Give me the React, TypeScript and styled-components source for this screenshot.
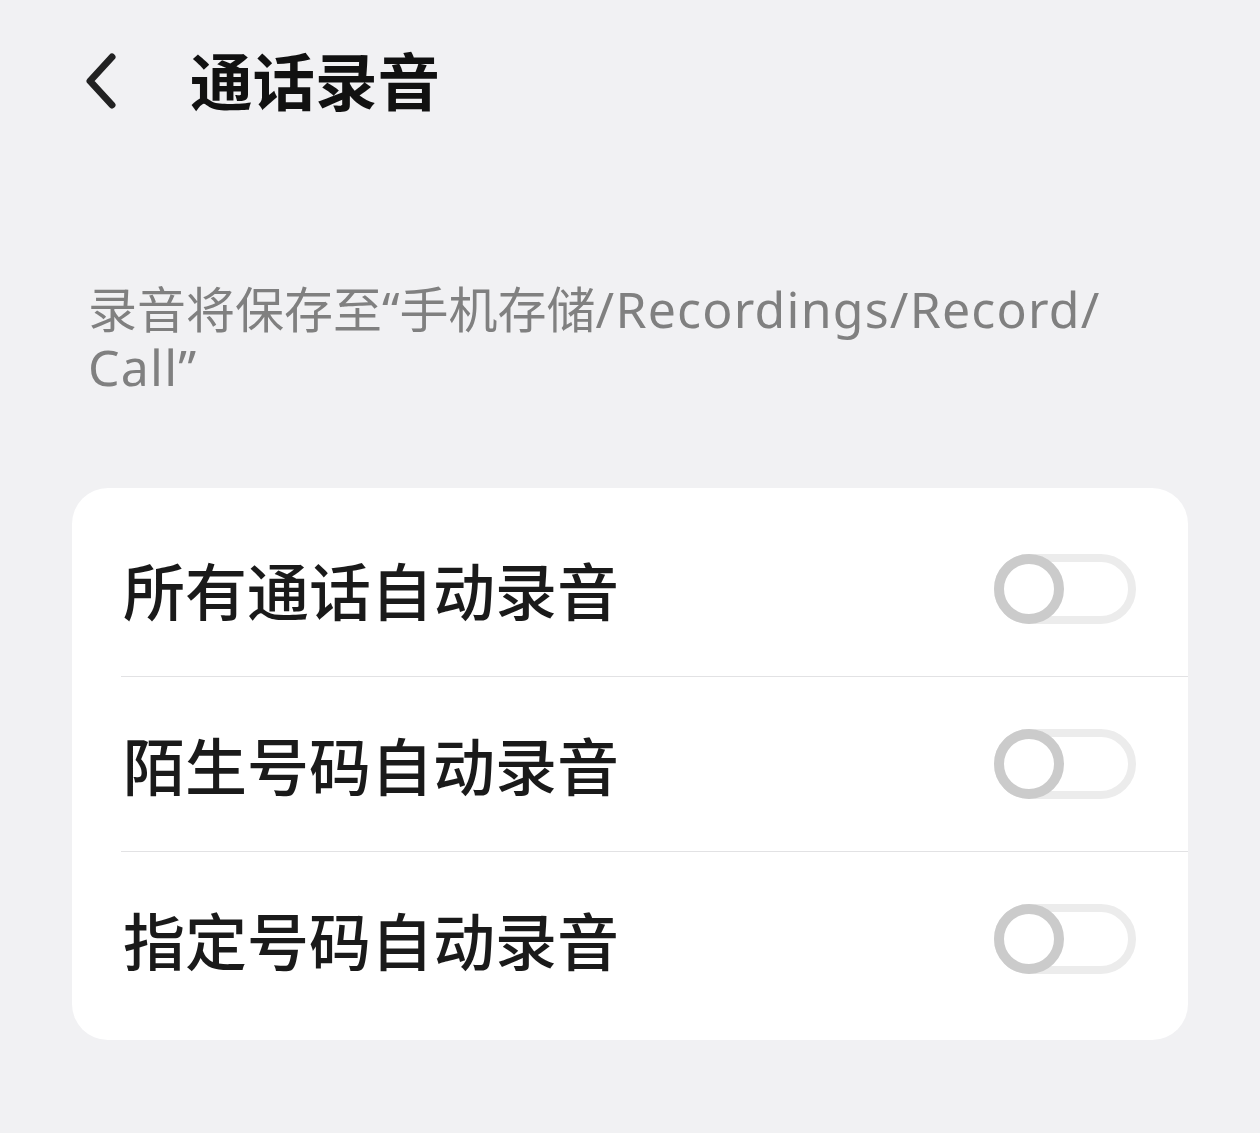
import React, { useState } from 'react'
import styled, { createGlobalStyle } from 'styled-components'

const GlobalStyle = createGlobalStyle`
  html, body {
    margin: 0;
    padding: 0;
    background: #f1f1f3;
  }
  body {
    font-family: 'Noto Sans CJK SC', 'Noto Sans', sans-serif;
  }
`

interface Setting {
  key: string
  label: string
}

const settings: Setting[] = [
  { key: 'all', label: '所有通话自动录音' },
  { key: 'stranger', label: '陌生号码自动录音' },
  { key: 'specified', label: '指定号码自动录音' },
]

const App: React.FC = () => {
  const [values, setValues] = useState<Record<string, boolean>>({})

  return (
    <Page>
      <GlobalStyle />
      <Header>
        <BackButton aria-label="返回">
          <svg width="36" height="56" viewBox="0 0 36 56" fill="none">
            <path d="M29 4 L7 28 L29 52" stroke="#222" strokeWidth="7" strokeLinecap="round" strokeLinejoin="round" />
          </svg>
        </BackButton>
        <Title>通话录音</Title>
      </Header>

      <Description>
        <DescLine>
          录音将保存至“手机存储<Latin>/Recordings/Record/</Latin>
        </DescLine>
        <DescLine>
          <Latin>Call”</Latin>
        </DescLine>
      </Description>

      <Card>
        {settings.map((item, i) => (
          <Row key={item.key} $divider={i > 0}>
            <Label>{item.label}</Label>
            <Switch
              $on={!!values[item.key]}
              onClick={() => setValues((v) => ({ ...v, [item.key]: !v[item.key] }))}
            >
              <Knob $on={!!values[item.key]} />
            </Switch>
          </Row>
        ))}
      </Card>
    </Page>
  )
}

const Page = styled.div`
  width: 1260px;
  min-height: 1133px;
  background: #f1f1f3;
  box-sizing: border-box;
  padding-top: 46px;
`

const Header = styled.div`
  display: flex;
  align-items: center;
  height: 66px;
  padding-left: 81px;
`

const BackButton = styled.button`
  display: flex;
  align-items: center;
  justify-content: center;
  border: none;
  background: none;
  padding: 0;
  width: 40px;
  height: 60px;
  margin-top: 4px;
  cursor: pointer;
`

const Title = styled.h1`
  margin: 0 0 0 69px;
  font-size: 62.5px;
  font-weight: 700;
  color: #111;
  line-height: 66px;
  letter-spacing: 0;
`

const Description = styled.div`
  display: flex;
  flex-direction: column;
  margin: 168px 0 0;
  padding: 0 40px 0 88px;
  font-family: 'Noto Sans', 'Noto Sans CJK SC', sans-serif;
  font-size: 49px;
  color: #808080;
  font-weight: 400;
  white-space: nowrap;
`

const DescLine = styled.div`
  height: 58px;
  line-height: 58px;
`

const Latin = styled.span`
  font-size: 50px;
  letter-spacing: 1.2px;
`

const Card = styled.div`
  margin: 92px 72px 0;
  background: #fff;
  border-radius: 36px;
  padding: 13px 0 14px;
`

const Row = styled.div<{ $divider: boolean }>`
  display: flex;
  align-items: center;
  justify-content: space-between;
  height: 175px;
  box-sizing: border-box;
  margin-left: 49px;
  padding-right: 52px;
  border-top: ${(p) => (p.$divider ? '1px solid #e2e2e4' : 'none')};
`

const Label = styled.span`
  font-size: 62px;
  font-weight: 500;
  color: #1a1a1a;
  padding-left: 2px;
`

const Switch = styled.div<{ $on: boolean }>`
  position: relative;
  width: 142px;
  height: 70px;
  box-sizing: border-box;
  border-radius: 35px;
  border: 8px solid ${(p) => (p.$on ? '#3b7cff' : '#ececec')};
  background: ${(p) => (p.$on ? '#3b7cff' : '#fff')};
  cursor: pointer;
`

const Knob = styled.div<{ $on: boolean }>`
  position: absolute;
  top: -8px;
  left: ${(p) => (p.$on ? '64px' : '-8px')};
  width: 70px;
  height: 70px;
  box-sizing: border-box;
  border-radius: 50%;
  border: 10px solid ${(p) => (p.$on ? '#3b7cff' : '#cbcbcb')};
  background: #fff;
`

export default App
